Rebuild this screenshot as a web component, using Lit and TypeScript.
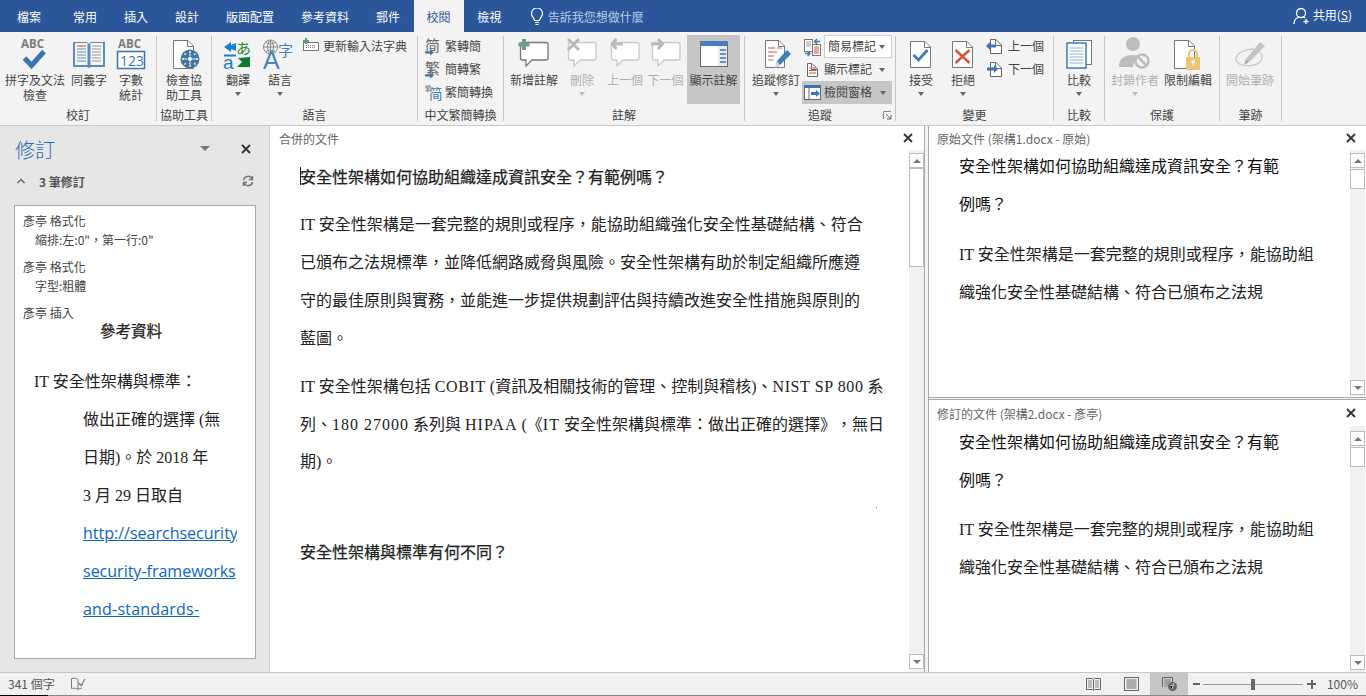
import { LitElement, html, css, svg, TemplateResult } from "lit";
import { customElement } from "lit/decorators.js";

const page = (x: number, y: number, w: number, h: number, stroke = "#777") => svg`
  <path d="M${x + .5} ${y + .5}H${x + w - 6}L${x + w - .5} ${y + 6}V${y + h - .5}H${x + .5}Z" fill="#fff" stroke=${stroke}/>
  <path d="M${x + w - 6.5} ${y + .5}V${y + 6.5}H${x + w - .5}" fill="none" stroke=${stroke}/>`;

const bubble = (stroke: string) => svg`
  <path d="M6.5 7.5H30a2 2 0 0 1 2 2V23a2 2 0 0 1-2 2H16l-6 6v-6H6.5a2 2 0 0 1-2-2V9.500a2 2 0 0 1 2-2Z" fill="#fff" stroke=${stroke} stroke-width="1.300"/>`;

const big = (content: unknown) => html`<svg class="big" width="36" height="37" viewBox="0 0 36 37">${content}</svg>`;
const small = (content: unknown) => html`<svg class="small" width="18" height="18" viewBox="0 0 18 18">${content}</svg>`;

const icons: Record<string, TemplateResult> = {
  spell: big(svg`<text x="4" y="13" class="abc">ABC</text><path d="M7.500 23l7 7.500L27 16.500" fill="none" stroke="#3b76ae" stroke-width="5"/>`),
  book: big(svg`<path d="M2 7h14l2 2 2-2h14v25H20l-2 1-2-1H2Z" fill="#5b8cbc"/><path d="M4 8h12.500v22H4Z M19.500 8H32v22H19.500Z" fill="#f6f6f6"/>
    <path d="M6 11h9" stroke="#d2492a"/><path d="M6 14h9M6 17h9M6 20h9M6 23h9M6 26h9" stroke="#5b8cbc"/><path d="M21 11h9M21 14h9M21 17h9M21 20h9M21 23h9M21 26h9" stroke="#999"/>`),
  count: big(svg`<text x="5" y="13" class="abc">ABC</text><rect x="4.500" y="16.500" width="27" height="17" fill="#fff" stroke="#3b76ae" stroke-width="1.500"/><text x="7" y="30.500" font-size="14" fill="#3b76ae" font-family="Open Sans">123</text>`),
  a11y: big(svg`${page(7, 5, 21, 29)}<circle cx="24" cy="24" r="9.500" fill="#46769f"/><circle cx="24" cy="24" r="2.500" fill="#fff"/><path d="M24 16v16M16 24h16M18.500 18.500l11 11M29.500 18.500l-11 11" stroke="#fff" stroke-width="1.300"/><circle cx="24" cy="24" r="6" fill="#46769f"/><circle cx="24" cy="24" r="2" fill="#fff"/><path d="M24 18.500v3M18.500 24h3M26.500 24h3M24 26.500v3" stroke="#fff"/>`),
  translate: big(svg`<path d="M4 12l7-5v3l5-2v8l-5-2v3Z" fill="#1a7fd1"/><rect x="4" y="19.500" width="12" height="2" fill="#1a7fd1"/><text x="16" y="19" font-size="15" fill="#2c8a3a" font-family="Noto Sans CJK JP">あ</text><text x="3" y="34" font-size="19" fill="#1a7fd1" font-family="Liberation Sans">a</text><path d="M30 22v10H17l5-5-4-4Z" fill="#0f7a2f"/>`),
  language: big(svg`<circle cx="8.500" cy="12" r="7" fill="#f3f3f3" stroke="#8a8a8a"/><path d="M1.500 12h14M8.500 5v14M3.500 7c3 2.500 7 2.500 10 0M3.500 17c3-2.500 7-2.500 10 0" fill="none" stroke="#8a8a8a"/><path d="M8.500 5c-4 3.500-4 10.500 0 14c4-3.500 4-10.500 0-14" fill="none" stroke="#8a8a8a"/>
    <text x="1" y="34" font-size="25" fill="#4a84bf" font-family="Liberation Sans">A</text><text x="16" y="21" font-size="15" fill="#4a84bf" font-family="Noto Sans CJK TC">字</text>`),
  dict: small(svg`<rect x=".5" y="4.500" width="15" height="8" fill="#fff" stroke="#777"/><path d="M3 7.500h10M3 9.500h10" stroke="#888" stroke-dasharray="1 1"/><path d="M3 0v6M0 3h6" stroke="#5f9d89" stroke-width="2"/>`),
  t2s: small(svg`<text x="0" y="13" font-size="15" fill="#666" font-family="Noto Sans CJK TC">简</text><path d="M0 13.500h5v-2l4 3-4 3v-2H0Z" fill="#3b76ae"/>`),
  s2t: small(svg`<text x="0" y="13" font-size="15" fill="#666" font-family="Noto Sans CJK TC">繁</text><path d="M0 13.500h5v-2l4 3-4 3v-2H0Z" fill="#3b76ae"/>`),
  conv: small(svg`<text x="0" y="7" font-size="6.500" fill="#666" font-family="Noto Sans CJK TC">繁</text><text x="4" y="15" font-size="13.500" fill="#3b76ae" font-family="Noto Sans CJK TC">简</text>`),
  comment: big(svg`${bubble("#777")}<path d="M8 4v11M2.500 9.500h11" stroke="#6ba08c" stroke-width="4"/>`),
  del: big(svg`${bubble("#c9c9c9")}<path d="M4 4l11 11M15 4L4 15" stroke="#b9b9b9" stroke-width="3"/>`),
  prev: big(svg`${bubble("#c9c9c9")}<path d="M16 9H5M9.500 4L5 9l4.500 5" fill="none" stroke="#b9b9b9" stroke-width="2.800"/>`),
  next: big(svg`${bubble("#c9c9c9")}<path d="M3 9h11M10 4l4.500 5-4.500 5" fill="none" stroke="#b9b9b9" stroke-width="2.800"/>`),
  show: big(svg`<rect x="4.500" y="6.500" width="27" height="25" fill="#fff" stroke="#6a6a6a"/><rect x="4" y="6" width="28" height="5" fill="#4a7ebb"/><rect x="22" y="11" width="9" height="20" fill="#e9e9e9"/><path d="M24 15h6M24 19h6M24 23h6M24 27h6" stroke="#3b76ae" stroke-width="1.500"/>`),
  track: big(svg`${page(7, 5, 20, 28)}<path d="M10 13h7M10 17h9M10 21h6" stroke="#c9543a"/><path d="M10 25h6M19 13h5" stroke="#888"/><path d="M17 33l2-7L29 15l4 4L22 30Z" fill="#3f7cb8"/><path d="M17 33l2-7 3 4Z" fill="#cde"/>`),
  compareDoc: small(svg`<rect x=".5" y="1.500" width="8" height="12" fill="#fff" stroke="#777"/><rect x="8.500" y="6.500" width="8" height="11" fill="#fff" stroke="#777"/><path d="M2 4h5M2 6h5M2 8h5" stroke="#999"/><path d="M10 9h5M10 11h5M10 13h5M10 15h5" stroke="#c9543a"/><path d="M16 3.500h-5M13 1l-2.500 2.500L13 6M1 15.500h5M3.500 13L6 15.500 3.500 18" fill="none" stroke="#3b76ae" stroke-width="1.300"/>`),
  markup: small(svg`${page(3, 2, 11, 14, "#666")}<path d="M5 7h7M5 9.500h7M5 12h7" stroke="#c9543a"/>`),
  pane: small(svg`<rect x=".5" y="1.500" width="16" height="14" fill="#fff" stroke="#666"/><rect x="0" y="1" width="17" height="3" fill="#3b76ae"/><path d="M5 4v11" stroke="#666"/><path d="M7 8h5V6l4 3.500-4 3.500v-2H7Z" fill="#3b76ae"/>`),
  accept: big(svg`${page(7, 6, 21, 27)}<path d="M10.500 20l5 5 9-10" fill="none" stroke="#3f7cb8" stroke-width="2.800"/>`),
  reject: big(svg`${page(7, 6, 21, 27)}<path d="M10.500 15l14 13M24.500 15l-14 13" fill="none" stroke="#d4553a" stroke-width="2.500"/>`),
  docPrev: small(svg`${page(4, 1, 12, 15, "#666")}<path d="M0 8l4-4v2.500h6v3H4V12Z" fill="#3b76ae"/>`),
  docNext: small(svg`${page(4, 1, 12, 15, "#666")}<path d="M12 8l-4-4v2.500H1v3h7V12Z" fill="#3b76ae"/>`),
  compare: big(svg`<rect x="12.500" y="5.500" width="18" height="24" fill="#fff" stroke="#777"/><rect x="6" y="8" width="19" height="25" fill="#fff" stroke="#3f7cb8" stroke-width="1.500"/><path d="M8.500 13h14M8.500 16h14M8.500 19h14M8.500 22h14M8.500 25h14M8.500 28h14" stroke="#8fb3d6"/>`),
  block: big(svg`<circle cx="16" cy="9" r="7" fill="#bdbdbd"/><path d="M2 32c0-9 6-12 14-12 4 0 7 1 9 3-6 1-9 5-9 9Z" fill="#bdbdbd"/><circle cx="25" cy="26" r="6.500" fill="#f3f3f3" stroke="#bdbdbd" stroke-width="2.500"/><path d="M21 22l8 8" stroke="#bdbdbd" stroke-width="2.500"/>`),
  restrict: big(svg`${page(4, 5, 21, 29)}<rect x="16" y="22" width="14" height="13" rx="1" fill="#eec476"/><path d="M19 22v-3a4 4 0 0 1 8 0v3" fill="none" stroke="#eec476" stroke-width="2"/><circle cx="23" cy="27" r="1.800" fill="#fff"/><path d="M23 27v4" stroke="#fff"/>`),
  ink: big(svg`<path d="M14 24L28 7l5 4-16 16Z" fill="#c3c3c3"/><path d="M14 24l-2 6 5-3Z" fill="#aaa"/><path d="M22 14c-9 0-18 4-18 10s10 8 18 6 10-8 6-13" fill="none" stroke="#c8c8c8" stroke-width="1.300"/>`),
};

interface Tall { label: string; icon: string; w: number; caret?: boolean; off?: boolean; on?: boolean; }
interface Row { label: string; icon: string; caret?: boolean; combo?: boolean; on?: boolean; }
interface Group { name: string; w: number; pad: number; tall: Tall[]; rows?: Row[]; rowGap?: number; rowsLeft?: number; launcher?: boolean; }

const groups: Group[] = [
  { name: "校訂", w: 156, pad: 3, tall: [
    { label: "拼字及文法\n檢查", icon: "spell", w: 64 },
    { label: "同義字", icon: "book", w: 44 },
    { label: "字數\n統計", icon: "count", w: 40 } ] },
  { name: "協助工具", w: 54, pad: 5, tall: [{ label: "檢查協\n助工具", icon: "a11y", w: 44 }] },
  { name: "語言", w: 205, pad: 5, tall: [
    { label: "翻譯", icon: "translate", w: 42, caret: true },
    { label: "語言", icon: "language", w: 42, caret: true } ],
    rows: [{ label: "更新輸入法字典", icon: "dict" }] },
  { name: "中文繁簡轉換", w: 85, pad: 5, tall: [], rows: [
    { label: "繁轉簡", icon: "t2s" }, { label: "簡轉繁", icon: "s2t" }, { label: "繁簡轉換", icon: "conv" } ] },
  { name: "註解", w: 240, pad: 6, tall: [
    { label: "新增註解", icon: "comment", w: 48 },
    { label: "刪除", icon: "del", w: 48, caret: true, off: true },
    { label: "上一個", icon: "prev", w: 38, off: true },
    { label: "下一個", icon: "next", w: 43, off: true },
    { label: "顯示註解", icon: "show", w: 53, on: true } ] },
  { name: "追蹤", w: 150, pad: 6, launcher: true, rowsLeft: 1, tall: [
    { label: "追蹤修訂", icon: "track", w: 50, caret: true } ], rows: [
    { label: "簡易標記", icon: "compareDoc", combo: true },
    { label: "顯示標記", icon: "markup", caret: true },
    { label: "檢閱窗格", icon: "pane", caret: true, on: true } ] },
  { name: "變更", w: 157, pad: 4, rowGap: 4, tall: [
    { label: "接受", icon: "accept", w: 42, caret: true },
    { label: "拒絕", icon: "reject", w: 42, caret: true } ], rows: [
    { label: "上一個", icon: "docPrev" }, { label: "下一個", icon: "docNext" } ] },
  { name: "比較", w: 50, pad: 4, tall: [{ label: "比較", icon: "compare", w: 42, caret: true }] },
  { name: "保護", w: 114, pad: 4, tall: [
    { label: "封鎖作者", icon: "block", w: 52, caret: true, off: true },
    { label: "限制編輯", icon: "restrict", w: 54 } ] },
  { name: "筆跡", w: 61, pad: 5, tall: [{ label: "開始筆跡", icon: "ink", w: 50, off: true }] },
];

const tabs = ["常用", "插入", "設計", "版面配置", "參考資料", "郵件", "校閱", "檢視"];

const heading = "安全性架構如何協助組織達成資訊安全？有範例嗎？";

const scrollbar = (thumb: string) => html`
  <div class="sb">
    <div class="sb-btn"><i class="up"></i></div>
    <div class="thumb ${thumb}"></div>
    <div class="sb-fill"></div>
    <div class="sb-btn"><i class="down"></i></div>
  </div>`;

const close = html`<svg class="x" width="10" height="10" viewBox="0 0 10 10"><path d="M1 1l8 8M9 1l-8 8" stroke="#333" stroke-width="1.800"/></svg>`;

@customElement("app-root")
export class AppRoot extends LitElement {
  static styles = css`
    :host { display: block; width: 1366px; height: 696px; overflow: hidden; background: #fff; color: #444;
      font: 12px/15px "Noto Sans CJK TC", "Liberation Sans", sans-serif; text-spacing-trim: space-all; }
    .tabs { height: 32px; background: #2b579a; color: #fff; display: flex; align-items: stretch; }
    .tab { padding: 9px 13.500px 0; height: 32px; box-sizing: border-box; white-space: nowrap; }
    .tab.file { padding-left: 17px; padding-right: 18.500px; }
    .tab.active { background: #f3f3f3; color: #2b579a; padding: 9px 13px 0; }
    .tell { margin-left: 15px; display: flex; gap: 4px; color: #b9cbe4; padding-top: 9px; }
    .tell svg { margin-top: -1px; }
    .share { margin-left: auto; display: flex; gap: 2px; padding: 7px 14px 0 0; }

    .ribbon { height: 93px; background: #f3f3f3; border-bottom: 1px solid #c9c9c9; display: flex; box-sizing: content-box; }
    .group { box-sizing: border-box; position: relative; display: flex; flex-direction: column; flex: none; }
    .group-main { height: 72px; margin-top: 3px; display: flex; }
    .group-label { height: 15px; text-align: center; margin-top: 0; white-space: nowrap; }
    .sep { width: 1px; height: 85px; margin-top: 4px; background: #c6c6c6; flex: none; }
    .tall { display: flex; flex-direction: column; align-items: center; height: 69px; flex: none; white-space: pre-line; text-align: center; }
    .tall.on { background: #c6c6c6; }
    .tall.off { color: #b1b1b1; }
    .big { flex: none; display: block; overflow: visible; }
    .abc { font: bold 11.5px "Open Sans", sans-serif; fill: #7b7b7b; }
    .caret { width: 0; height: 0; border: 3.5px solid transparent; border-top: 4px solid #666; border-bottom: 0; margin-top: 5px; }
    .off .caret { border-top-color: #bbb; }
    .rows { display: flex; flex-direction: column; }
    .row { height: 23px; display: flex; align-items: center; padding-left: 2px; white-space: nowrap; }
    .row.on { background: #c6c6c6; }
    .row .caret { margin: 0 0 0 5px; }
    .row .t { margin-top: -2px; }
    .row.on .caret { margin-left: auto; margin-right: 6px; }
    .small { flex: none; overflow: visible; }
    .combo { width: 68px; height: 23px; background: #fff; border: 1px solid #d0d0d0; display: flex; align-items: center; padding-left: 3px; box-sizing: border-box; }
    .combo .caret { margin-left: auto; margin-right: 6px; }
    .launcher { position: absolute; right: 3px; bottom: 5px; }

    .main { height: 546px; display: flex; }
    .tasks { flex: none; background: #e6e6e6; border-right: 1px solid #cfcfcf; padding: 0 13px 0 14px; display: flex; flex-direction: column; width: 242px; }
    .tasks-head { height: 42px; display: flex; align-items: center; padding-top: 3px; color: #666; flex: none; }
    .tasks-title { font-size: 20px; line-height: 26px; color: #2b6cb0; font-weight: 300; margin-left: 1px; }
    .tasks-tri { margin-left: auto; margin-right: 31px; margin-top: -4px; width: 0; height: 0; border: 5px solid transparent; border-top: 5px solid #777; border-bottom: 0; }
    .tasks-close { margin-right: 5px; margin-top: -4px; }
    .tasks-sub { height: 20px; margin-bottom: 14px; display: flex; align-items: center; font-weight: 700; color: #555; flex: none; padding-left: 2px; }
    .tasks-sub span { margin-left: 13px; }
    .tasks-sub svg:last-child { margin-left: auto; margin-right: 2px; }
    .revs { height: 454px; flex: none; background: #fff; border: 1px solid #ababab; box-sizing: border-box; padding: 5px 18px 0 8px; overflow: hidden; }
    .rev-h { height: 19px; line-height: 19px; font-size: 12px; }
    .rev-d { height: 27px; line-height: 19px; padding-left: 12px; white-space: nowrap; }
    .rev-title { text-align: center; font-size: 15.500px; color: #222; -webkit-text-stroke: .25px #222; line-height: 18px; height: 18px; margin-top: -1px; padding-left: 2px; }
    .rev-p { margin-left: 11px; margin-top: 24px; font: 16px/38px "Liberation Serif", "Noto Sans CJK TC", serif; color: #222; white-space: nowrap; }
    .rev-i { margin-left: 60px; height: 38px; font: 16px/38px "Liberation Serif", "Noto Sans CJK TC", serif; color: #222; white-space: nowrap; overflow: hidden; }
    .rev-i a { color: #0b66c3; text-decoration: underline; font-family: "Open Sans", sans-serif; line-height: 1; }
    .rev-i a.wide { letter-spacing: .2px; }

    .pane { display: flex; flex-direction: column; position: relative; min-width: 0; }
    .pane-head { height: 24px; flex: none; display: flex; align-items: center; padding-left: 9px; padding-right: 11px; font-size: 12px; color: #666; }
    .pane-head span { white-space: nowrap; }
    .pane-head .x { margin-left: auto; }
    .pane-body { flex: 1; min-height: 0; display: flex; }
    .doc { flex: 1; min-width: 0; overflow: hidden; color: #222; font: 16px/38px "Liberation Serif", "Noto Sans CJK TC", serif; white-space: nowrap; position: relative; }
    .doc p { margin: 0 0 11px; }
    .doc .h { font-family: "Noto Sans CJK TC", sans-serif; -webkit-text-stroke: .25px #222; }
    .lat { letter-spacing: .6px; }
    .lat2 { letter-spacing: 1px; }
    .center { width: 654px; flex: none; }
    .center .doc { padding: 7px 0 0 30px; }
    .center .doc p.first { margin-bottom: 10px; }
    .center .doc p.last { line-height: 37.700px; margin-bottom: 51px; }
    .cursor { position: absolute; left: 30px; top: 17px; width: 1px; height: 18px; background: #222; }
    .speck { position: absolute; left: 606px; top: 357px; width: 1px; height: 1px; background: #777; }
    .split { width: 3px; flex: none; border-left: 1px solid #aaa; border-right: 1px solid #aaa; background: #f3f3f3; }
    .right { flex: 1; display: flex; flex-direction: column; min-width: 0; }
    .right .doc { padding-left: 30px; margin-top: -4px; }
    .right .doc .h { -webkit-text-stroke: 0; color: #111; }
    .upper .doc p { margin-bottom: 13.500px; }
    .lower .doc p { margin-bottom: 12.500px; }
    .upper { height: 271px; flex: none; }
    .hsplit { height: 3px; flex: none; border-top: 1px solid #aaa; border-bottom: 1px solid #aaa; background: #f3f3f3; box-sizing: border-box; }
    .lower { flex: 1; }
    .lower .pane-head { height: 26px; }
    .lower .sb { padding-top: 5px; padding-bottom: 2px; }
    .right .pane-head { padding-left: 8px; padding-right: 10px; }
    .sb { width: 15px; flex: none; background: #f1f1f1; display: flex; flex-direction: column; padding-top: 3px; padding-bottom: 2px; box-sizing: border-box; margin-right: 1px; }
    .center .sb { margin-right: 0; padding-bottom: 3px; }
    .sb-btn { height: 15px; flex: none; background: #fff; border: 1px solid #bdbdbd; box-sizing: border-box; display: flex; align-items: center; justify-content: center; }
    .sb-btn i { width: 0; height: 0; border: 4px solid transparent; }
    .sb-btn .up { border-top: 0; border-bottom: 4px solid #777; }
    .sb-btn .down { border-bottom: 0; border-top: 4px solid #777; }
    .thumb { background: #fff; border: 1px solid #bdbdbd; box-sizing: border-box; flex: none; }
    .thumb.long { height: 99px; }
    .thumb.short { height: 20px; margin-top: 1px; }
    .sb-fill { flex: 1; }

    .status { height: 22px; border-top: 1px solid #c6c6c6; border-bottom: 1px solid #8a8a8a; background: #f1f1f1; display: flex; align-items: center; color: #555; position: relative; }
    .status::after { content: ""; position: absolute; left: 0; bottom: -1px; width: 48px; height: 1px; background: #000; }
    .words { margin-left: 8px; white-space: nowrap; font-size: 12px; margin-top: -2px; }
    .proof { margin-left: 16px; }
    .views { margin-left: auto; display: flex; align-items: center; height: 22px; }
    .view { width: 38px; height: 22px; display: flex; align-items: center; justify-content: center; }
    .view.on { background: #c6c6c6; }
    .zoom { display: flex; align-items: center; margin-left: 5px; }
    .zoom-btn { height: 2px; background: #666; position: relative; }
    .zoom-btn.minus { width: 7px; margin-right: 3px; }
    .zoom-btn.plus { width: 9px; margin-left: 4px; }
    .zoom-btn.plus::after { content: ""; position: absolute; left: 3.500px; top: -3.500px; width: 2px; height: 9px; background: #666; }
    .track { width: 100px; height: 1px; background: #999; position: relative; }
    .track::after { content: ""; position: absolute; left: 48px; top: -5px; width: 4px; height: 11px; background: #666; }
    .pct { width: 50px; text-align: right; padding-right: 8px; box-sizing: border-box; margin-top: -2px; }
  `;

  private renderTall(b: Tall) {
    return html`<div class="tall ${b.on ? "on" : ""} ${b.off ? "off" : ""}" style="width:${b.w}px">
      ${icons[b.icon]}<div>${b.label}</div>${b.caret ? html`<div class="caret"></div>` : ""}
    </div>`;
  }

  private renderRow(r: Row, gap: number) {
    return html`<div class="row ${r.on ? "on" : ""}" style="gap:${gap}px">
      ${icons[r.icon]}
      ${r.combo
        ? html`<div class="combo"><span class="t">${r.label}</span><div class="caret"></div></div>`
        : html`<span class="t">${r.label}</span>${r.caret ? html`<div class="caret"></div>` : ""}`}
    </div>`;
  }

  private renderGroup(g: Group) {
    return html`<div class="group" style="width:${g.w}px">
      <div class="group-main" style="padding-left:${g.pad}px">
        ${g.tall.map((b) => this.renderTall(b))}
        ${g.rows ? html`<div class="rows" style="margin-left:${g.rowsLeft ?? 0}px">${g.rows.map((r) => this.renderRow(r, g.rowGap ?? 2))}</div>` : ""}
      </div>
      <div class="group-label">${g.name}</div>
      ${g.launcher ? html`<svg class="launcher" width="9" height="9" viewBox="0 0 9 9"><path d="M.5 8V.5H8" fill="none" stroke="#888"/><path d="M3 3l5 5M8 4v4H4" fill="none" stroke="#666"/></svg>` : ""}
    </div><div class="sep"></div>`;
  }

  render() {
    return html`
      <div class="tabs">
        <div class="tab file">檔案</div>
        ${tabs.map((t) => html`<div class="tab ${t === "校閱" ? "active" : ""}">${t}</div>`)}
        <div class="tell">
          <svg width="14" height="18" viewBox="0 0 14 18"><path d="M4.500 12.500C4.500 10 1.500 9 1.500 5.500a5.500 5.500 0 0 1 11 0C12.500 9 9.500 10 9.500 12.500ZM5 14.500h4M5.500 16.500h3" fill="none" stroke="#fff" stroke-width="1.200"/></svg>
          告訴我您想做什麼
        </div>
        <div class="share">
          <svg width="18" height="18" viewBox="0 0 18 18"><circle cx="8" cy="6" r="4.500" fill="none" stroke="#fff" stroke-width="1.300"/><path d="M1 17c0-4 2-6 5-7M10 10l2 1M13 12v5M10.500 14.500h5" fill="none" stroke="#fff" stroke-width="1.300"/></svg>
          <span>共用(<u>S</u>)</span>
        </div>
      </div>
      <div class="ribbon">${groups.map((g) => this.renderGroup(g))}</div>
      <div class="main">
        <div class="tasks">
          <div class="tasks-head">
            <div class="tasks-title">修訂</div>
            <div class="tasks-tri"></div>
            <div class="tasks-close">${close}</div>
          </div>
          <div class="tasks-sub">
            <svg width="10" height="6" viewBox="0 0 10 6"><path d="M1.500 5L5 1.500 8.500 5" fill="none" stroke="#666" stroke-width="1.500"/></svg>
            <span>3 筆修訂</span>
            <svg width="12" height="12" viewBox="0 0 12 12"><path d="M1.500 5A4.500 4.500 0 0 1 10 4M10.500 7A4.500 4.500 0 0 1 2 8M10.500 1v3.500H7M1.500 11V7.500H5" fill="none" stroke="#777" stroke-width="1.500"/></svg>
          </div>
          <div class="revs">
            <div class="rev-h">彥亭 格式化</div>
            <div class="rev-d">縮排:左:0"，第一行:0"</div>
            <div class="rev-h">彥亭 格式化</div>
            <div class="rev-d">字型:粗體</div>
            <div class="rev-h">彥亭 插入</div>
            <div class="rev-title">參考資料</div>
            <div class="rev-p">IT 安全性架構與標準：</div>
            <div class="rev-i">做出正確的選擇 (無</div>
            <div class="rev-i">日期)。於 2018 年</div>
            <div class="rev-i">3 月 29 日取自</div>
            <div class="rev-i"><a>http://searchsecurity</a></div>
            <div class="rev-i"><a>security-frameworks</a></div>
            <div class="rev-i"><a class="wide">and-standards-</a></div>
          </div>
        </div>
        <div class="pane center">
          <div class="pane-head"><span>合併的文件</span>${close}</div>
          <div class="pane-body">
            <div class="doc">
              <p class="h">${heading}</p>
              <p class="first">IT 安全性架構是一套完整的規則或程序，能協助組織強化安全性基礎結構、符合<br>已頒布之法規標準，並降低網路威脅與風險。安全性架構有助於制定組織所應遵<br>守的最佳原則與實務，並能進一步提供規劃評估與持續改進安全性措施與原則的<br>藍圖。</p>
              <p class="last">IT 安全性架構包括 <span class="lat">COBIT</span> (資訊及相關技術的管理、控制與稽核)、<span class="lat">NIST SP 800</span> 系<br>列、<span class="lat2">180 27000</span> 系列與 <span class="lat2">HIPAA</span> (《<span class="lat2">IT</span> 安全性架構與標準：做出正確的選擇》，無日<br>期)。</p>
              <p class="h">安全性架構與標準有何不同？</p>
              <div class="cursor"></div>
              <div class="speck"></div>
            </div>
            ${scrollbar("long")}
          </div>
        </div>
        <div class="split"></div>
        <div class="right">
          <div class="pane upper">
            <div class="pane-head"><span>原始文件 (架構1.docx - 原始)</span>${close}</div>
            <div class="pane-body">
              <div class="doc">
                <p class="h">安全性架構如何協助組織達成資訊安全？有範<br>例嗎？</p>
                <p>IT 安全性架構是一套完整的規則或程序，能協助組<br>織強化安全性基礎結構、符合已頒布之法規</p>
              </div>
              ${scrollbar("short")}
            </div>
          </div>
          <div class="hsplit"></div>
          <div class="pane lower">
            <div class="pane-head"><span>修訂的文件 (架構2.docx - 彥亭)</span>${close}</div>
            <div class="pane-body">
              <div class="doc">
                <p class="h">安全性架構如何協助組織達成資訊安全？有範<br>例嗎？</p>
                <p>IT 安全性架構是一套完整的規則或程序，能協助組<br>織強化安全性基礎結構、符合已頒布之法規</p>
              </div>
              ${scrollbar("short")}
            </div>
          </div>
        </div>
      </div>
      <div class="status">
        <div class="words">341 個字</div>
        <svg class="proof" width="15" height="14" viewBox="0 0 15 14"><path d="M7 2.500C5.500 1 3 1 .5 1.500v10c2.500-.5 5-.5 6.500 1V2.500ZM7 12.500c1-1 2.500-1.300 4-1.300M11 7v2" fill="none" stroke="#777"/><path d="M7.500 6L10 8.500 14 2" fill="none" stroke="#777" stroke-width="1.200"/></svg>
        <div class="views">
          <div class="view"><svg width="15" height="14" viewBox="0 0 15 14"><path d="M.5 1.500h6l1 1 1-1h6v11h-6l-1 1-1-1h-6Z M7.500 2.500v10" fill="none" stroke="#666"/><path d="M2 4h4M2 6h4M2 8h4M2 10h4M9 4h4M9 6h4M9 8h4M9 10h4" stroke="#888"/></svg></div>
          <div class="view"><svg width="15" height="14" viewBox="0 0 15 14"><rect x=".5" y=".5" width="14" height="13" fill="none" stroke="#666"/><path d="M2.500 3h10M2.500 5h10M2.500 7h10M2.500 9h10M2.500 11h10" stroke="#666"/></svg></div>
          <div class="view on"><svg width="15" height="14" viewBox="0 0 15 14"><path d="M.5 10V.5h10v6" fill="none" stroke="#666"/><path d="M2.500 3h6M2.500 5h6M2.500 7h4M2.500 9h3" stroke="#777"/><circle cx="10.500" cy="9.500" r="4.500" fill="#666"/><path d="M8 8l3 1-1 3M11 6l1 3" stroke="#c6c6c6"/></svg></div>
          <div class="zoom">
            <div class="zoom-btn minus"></div>
            <div class="track"></div>
            <div class="zoom-btn plus"></div>
          </div>
          <div class="pct">100%</div>
        </div>
      </div>
    `;
  }
}
